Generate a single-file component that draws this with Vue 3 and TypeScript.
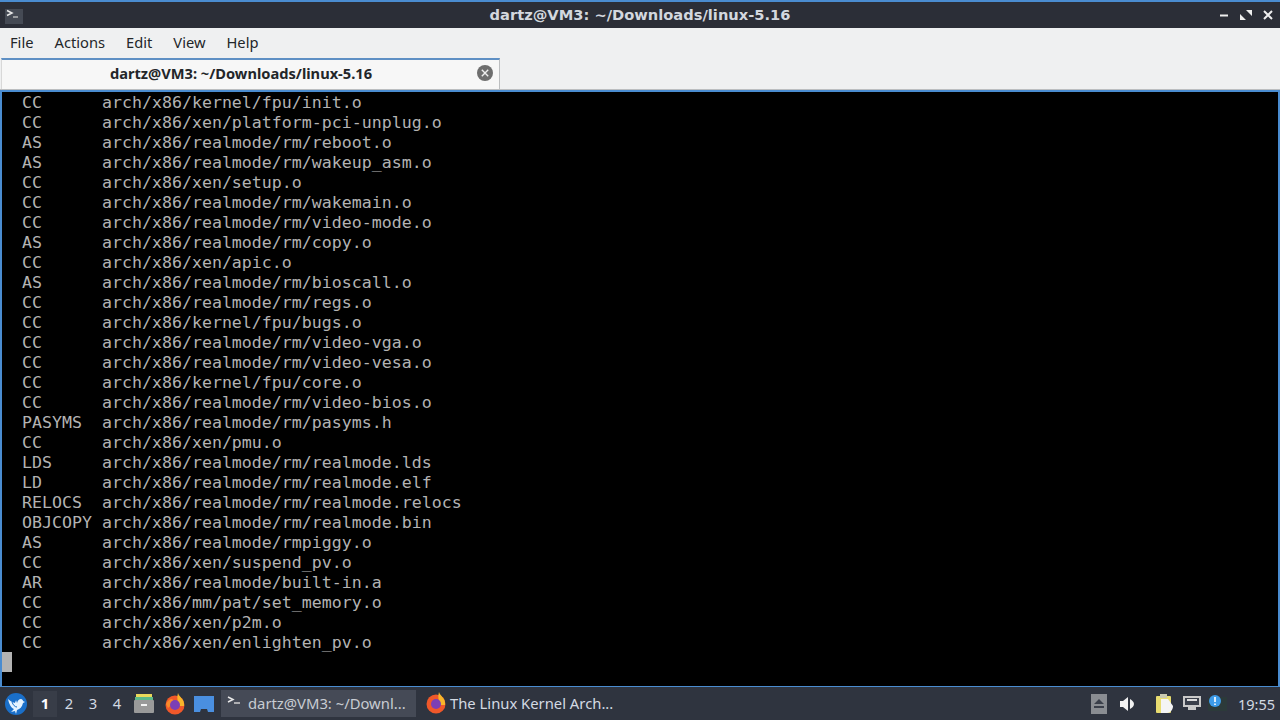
<script setup lang="ts">
const lines: [string, string][] = [
  ['CC', 'arch/x86/kernel/fpu/init.o'],
  ['CC', 'arch/x86/xen/platform-pci-unplug.o'],
  ['AS', 'arch/x86/realmode/rm/reboot.o'],
  ['AS', 'arch/x86/realmode/rm/wakeup_asm.o'],
  ['CC', 'arch/x86/xen/setup.o'],
  ['CC', 'arch/x86/realmode/rm/wakemain.o'],
  ['CC', 'arch/x86/realmode/rm/video-mode.o'],
  ['AS', 'arch/x86/realmode/rm/copy.o'],
  ['CC', 'arch/x86/xen/apic.o'],
  ['AS', 'arch/x86/realmode/rm/bioscall.o'],
  ['CC', 'arch/x86/realmode/rm/regs.o'],
  ['CC', 'arch/x86/kernel/fpu/bugs.o'],
  ['CC', 'arch/x86/realmode/rm/video-vga.o'],
  ['CC', 'arch/x86/realmode/rm/video-vesa.o'],
  ['CC', 'arch/x86/kernel/fpu/core.o'],
  ['CC', 'arch/x86/realmode/rm/video-bios.o'],
  ['PASYMS', 'arch/x86/realmode/rm/pasyms.h'],
  ['CC', 'arch/x86/xen/pmu.o'],
  ['LDS', 'arch/x86/realmode/rm/realmode.lds'],
  ['LD', 'arch/x86/realmode/rm/realmode.elf'],
  ['RELOCS', 'arch/x86/realmode/rm/realmode.relocs'],
  ['OBJCOPY', 'arch/x86/realmode/rm/realmode.bin'],
  ['AS', 'arch/x86/realmode/rmpiggy.o'],
  ['CC', 'arch/x86/xen/suspend_pv.o'],
  ['AR', 'arch/x86/realmode/built-in.a'],
  ['CC', 'arch/x86/mm/pat/set_memory.o'],
  ['CC', 'arch/x86/xen/p2m.o'],
  ['CC', 'arch/x86/xen/enlighten_pv.o'],
]
const menus = ['File', 'Actions', 'Edit', 'View', 'Help']
const desktops = ['1', '2', '3', '4']
</script>

<template>
  <div class="screen">
    <header class="titlebar">
      <div class="appicon">
        <svg width="18" height="15" viewBox="0 0 18 15"><path d="M2 1.500l5 2.500-5 2.500" fill="none" stroke="#e8e8e8" stroke-width="1.500"/><path d="M8 8h5" stroke="#c8c8c8" stroke-width="1.300"/></svg>
      </div>
      <div class="wintitle">dartz@VM3: ~/Downloads/linux-5.16</div>
      <div class="winbtns">
        <svg width="14" height="14" viewBox="0 0 14 14"><path d="M3 7.500h8" stroke="#eee" stroke-width="2"/></svg>
        <svg width="14" height="14" viewBox="0 0 14 14"><path d="M7 2h6v6zM1 6l6 6H1z" fill="#eee"/></svg>
        <svg width="14" height="14" viewBox="0 0 14 14"><path d="M3 3l8 8M11 3l-8 8" stroke="#eee" stroke-width="2"/></svg>
      </div>
    </header>

    <nav class="menubar">
      <span v-for="m in menus" :key="m" class="menu">{{ m }}</span>
    </nav>

    <div class="tabbar">
      <div class="tab">
        <span class="tabtext">dartz@VM3: ~/Downloads/linux-5.16</span>
        <svg class="tabclose" width="16" height="16" viewBox="0 0 16 16"><circle cx="8" cy="8" r="8" fill="#6e6e6e"/><path d="M4.800 4.800l6.400 6.400M11.200 4.800l-6.400 6.400" stroke="#eee" stroke-width="1.400"/></svg>
      </div>
    </div>

    <main class="terminal">
      <div v-for="(l, i) in lines" :key="i" class="row"><span class="tag">{{ l[0] }}</span><span>{{ l[1] }}</span></div>
      <div class="row"><span class="cursor"></span></div>
    </main>

    <footer class="panel">
      <svg class="start" width="24" height="24" viewBox="0 0 24 24">
        <circle cx="12" cy="12" r="11" fill="#1a6fc9"/>
        <path d="M4 7c2 2 4 3 7 4 0-1 1-2 1-3l1 3c1-3 2-4 4-4 1 0 2 1 2 2l2 1-2 1c-1 4-3 6-6 7l-1 4-1-3-4 1 3-3c-3-1-5-5-6-10z" fill="#e6f3ff"/>
        <path d="M8 10c1 3 3 5 5 5" fill="none" stroke="#1a6fc9" stroke-width="1"/>
      </svg>
      <div class="desktops">
        <span v-for="(d, i) in desktops" :key="d" class="desk" :class="{ active: i === 0 }">{{ d }}</span>
      </div>
      <svg class="filer" width="22" height="24" viewBox="0 0 22 24">
        <rect x="3" y="2" width="16" height="3" fill="#e9d85a"/>
        <rect x="2" y="5" width="18" height="3" fill="#5cb88a"/>
        <rect x="1" y="8" width="20" height="13" rx="1" fill="#9a9a9a"/>
        <rect x="8" y="12" width="6" height="2" fill="#f4f4f4"/>
      </svg>
      <svg class="fox" width="22" height="24" viewBox="0 0 22 24">
        <circle cx="11" cy="13" r="9.500" fill="#f0582a"/>
        <path d="M14 1c1 4 7 6 6 13h-5c0-3-3-6-1-13z" fill="#f8b62b"/>
        <path d="M2 12c1-3 4-5 6-5l3 3-7 6z" fill="#f98a2a"/>
        <circle cx="11" cy="13" r="5" fill="#7c3fb5"/>
      </svg>
      <svg class="blue" width="22" height="24" viewBox="0 0 22 24">
        <path d="M1 4h20v16h-6l-1-3H8l-1 3H1z" fill="#4a8fe0"/>
      </svg>
      <div class="task current">
        <svg width="18" height="18" viewBox="0 0 18 18"><path d="M2 3l5 2.500L2 8" fill="none" stroke="#e8e8e8" stroke-width="1.500"/><path d="M8 9h6" stroke="#d0d0d0" stroke-width="1.500"/></svg>
        <span>dartz@VM3: ~/Downl...</span>
      </div>
      <div class="task other">
        <svg width="22" height="24" viewBox="0 0 22 24">
          <circle cx="11" cy="13" r="9.500" fill="#f0582a"/>
          <path d="M14 1c1 4 7 6 6 13h-5c0-3-3-6-1-13z" fill="#f8b62b"/>
          <circle cx="11" cy="13" r="5" fill="#7c3fb5"/>
        </svg>
        <span>The Linux Kernel Arch...</span>
      </div>
      <div class="tray">
        <div class="eject"><svg width="16" height="20" viewBox="0 0 16 20"><path d="M8 5l5 5H3z M3 12h10v2H3z" fill="#3a3f4a"/></svg></div>
        <svg class="vol" width="18" height="18" viewBox="0 0 18 18"><path d="M2 6h3l5-4v14l-5-4H2z" fill="#f2f2f2"/><path d="M12 4c2 1 4 3 4 5s-2 4-4 5z" fill="#f2f2f2"/></svg>
        <svg class="clip" width="20" height="22" viewBox="0 0 20 22"><rect x="1" y="3" width="15" height="17" rx="1" fill="#e8dc70"/><rect x="5" y="1" width="7" height="4" fill="#c9c9b0"/><path d="M6 6h7l5 7c0 4-3 7-6 7H6z" fill="#f4f4f4"/></svg>
        <svg class="net" width="20" height="18" viewBox="0 0 20 18"><path d="M1 1h18v11h-5v3H6v-3H1z" fill="#c9c9c9"/><rect x="3" y="3" width="14" height="7" fill="#3a3f4a"/><path d="M5 4h10v2H5z" fill="#dcdcdc"/></svg>
        <svg class="notify" width="20" height="20" viewBox="0 0 20 20"><rect x="0" y="3" width="19" height="14" fill="#2c3a3a"/><circle cx="7" cy="7" r="6" fill="#3d9be8"/><path d="M7 3v5M7 9.500v1.500" stroke="#fff" stroke-width="1.600"/></svg>
        <span class="clock">19:55</span>
      </div>
    </footer>
  </div>
</template>

<style>
html, body { margin: 0; padding: 0; background: #000; overflow: hidden; }
</style>

<style scoped>
.screen {
  width: 1280px;
  height: 720px;
  display: flex;
  flex-direction: column;
  font-family: "Noto Sans", "Open Sans", sans-serif;
  overflow: hidden;
}
.titlebar {
  height: 26px;
  flex: none;
  border-top: 2px solid #4a8cd0;
  background: #2b2e37;
  color: #eee;
  display: flex;
  align-items: center;
  position: relative;
}
.appicon {
  width: 18px;
  height: 15px;
  margin-left: 5px;
  margin-top: 3px;
  background: #454a54;
  display: flex;
}
.wintitle {
  position: absolute;
  left: 0;
  right: 0;
  top: 3px;
  text-align: center;
  font-family: "DejaVu Sans", sans-serif;
  font-size: 14.670px;
  font-weight: 700;
  line-height: 20px;
  color: #d3d8df;
}
.winbtns {
  margin-left: auto;
  margin-right: 5px;
  display: flex;
  gap: 8px;
}
.menubar {
  height: 30px;
  flex: none;
  box-sizing: border-box;
  padding-bottom: 2px;
  background: #eff0f1;
  display: flex;
  align-items: center;
  padding-left: 10px;
  gap: 21px;
  font-size: 14.700px;
  color: #232629;
}
.tabbar {
  height: 32px;
  flex: none;
  background: #eff0f1;
  box-sizing: border-box;
  padding-left: 1px;
  border-bottom: 1px solid #bcbec0;
}
.tab {
  width: 499px;
  height: 31px;
  box-sizing: border-box;
  border-top: 2px solid #5e8fc4;
  border-right: 1px solid #bcbec0;
  border-left: 1px solid #d8d8d8;
  padding-right: 19px;
  background: #f7f7f7;
  position: relative;
  text-align: center;
}
.tabtext {
  display: inline-block;
  font-size: 14.650px;
  font-weight: 700;
  line-height: 27px;
  color: #232629;
}
.tabclose {
  position: absolute;
  left: 475px;
  top: 5px;
}
.terminal {
  flex: 1;
  background: #000;
  border: 2px solid #4a8cd0;
  border-bottom-width: 1px;
  color: #b3b3b3;
  font-family: "DejaVu Sans Mono", monospace;
  font-size: 16.600px;
  line-height: 22px;
  white-space: pre;
  min-height: 0;
}
.row {
  height: 20px;
  display: flex;
}
.tag {
  width: 100px;
  padding-left: 20px;
  box-sizing: border-box;
  flex: none;
}
.cursor {
  width: 10px;
  height: 20px;
  background: #b3b3b3;
}
.panel {
  height: 33px;
  flex: none;
  background: #2f343f;
  display: flex;
  align-items: center;
  color: #d3dae3;
  font-size: 14.800px;
  position: relative;
}
.start {
  margin-left: 4px;
  flex: none;
}
.desktops {
  display: flex;
  margin-left: 5px;
}
.desk {
  width: 24px;
  text-align: center;
  line-height: 24px;
  height: 26px;
}
.desk.active {
  background: #383d48;
  color: #fff;
  font-weight: 700;
}
.filer { flex: none; margin-left: 4px; }
.fox { flex: none; margin-left: 9px; }
.blue { flex: none; margin-left: 7px; }
.task {
  height: 27px;
  box-sizing: border-box;
  padding-bottom: 2px;
  display: flex;
  align-items: center;
  flex: none;
}
.task.current {
  width: 195px;
  background: #454a56;
  margin-left: 6px;
  padding-left: 5px;
  gap: 4px;
  color: #c8ccd2;
}
.task.other {
  margin-left: 9px;
  gap: 3px;
  color: #d3dae3;
}
.tray {
  margin-left: auto;
  display: flex;
  align-items: center;
  padding-right: 5px;
}
.eject {
  width: 16px;
  height: 20px;
  background: #8a8d92;
  margin-right: 11px;
}
.vol { margin-right: 19px; }
.clip { margin-right: 7px; }
.net { margin-right: 6px; }
.notify { margin-right: 10px; }
.clock { color: #d3dae3; font-size: 14.500px; }
</style>
